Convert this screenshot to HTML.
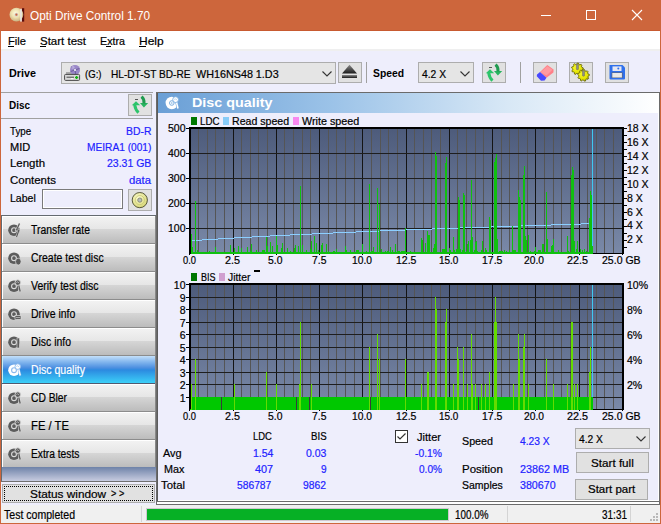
<!DOCTYPE html><html><head><meta charset="utf-8"><style>html,body{margin:0;padding:0;width:661px;height:524px;overflow:hidden;font-family:"Liberation Sans",sans-serif;}</style></head><body><div style="position:relative;width:661px;height:524px;overflow:hidden"><div style="position:absolute;left:0px;top:0px;width:661px;height:524px;background:#eeeefc"></div>
<div style="position:absolute;left:0px;top:0px;width:661px;height:31px;background:#cd663c"></div>
<div style="position:absolute;left:0px;top:30px;width:661px;height:1px;background:#c85a30"></div>
<div style="position:absolute;left:0px;top:0px;width:1px;height:524px;background:#cd663c"></div>
<div style="position:absolute;left:660px;top:0px;width:1px;height:524px;background:#cd663c"></div>
<div style="position:absolute;left:0px;top:523px;width:661px;height:1px;background:#cd663c"></div>
<div style="position:absolute;left:1px;top:31px;width:659px;height:18px;background:#fff"></div>
<div style="position:absolute;left:1px;top:49px;width:659px;height:2px;background:#efefef"></div>
<svg style="position:absolute;left:6px;top:5px" width="22" height="20" viewBox="0 0 22 20">
<defs><radialGradient id="cdg" cx="45%" cy="40%" r="60%"><stop offset="0" stop-color="#fffce0"/><stop offset="0.5" stop-color="#efe2b0"/><stop offset="1" stop-color="#c8b080"/></radialGradient></defs>
<rect x="16" y="3.2" width="2.2" height="13.4" fill="#5a0c0c"/>
<circle cx="10.4" cy="9.7" r="6.9" fill="url(#cdg)"/>
<rect x="14.2" y="3.8" width="1.6" height="12.8" fill="#e8e8e8"/>
<circle cx="10.4" cy="9.7" r="1.9" fill="#d0d0d0"/>
<circle cx="10.4" cy="9.7" r="1.1" fill="#cd663c"/>
</svg>
<div style="position:absolute;left:30.00px;top:9.84px;font-size:12px;line-height:12px;color:#fff;font-weight:normal;white-space:pre;transform:scaleX(0.9832);transform-origin:0 0;-webkit-text-stroke:0.2px currentColor;-webkit-text-stroke:0;">Opti Drive Control 1.70</div>
<div style="position:absolute;left:541px;top:15px;width:10px;height:1px;background:#fff"></div>
<div style="position:absolute;left:586px;top:10px;width:10px;height:10px;border:1px solid #fff;box-sizing:border-box"></div>
<svg style="position:absolute;left:631px;top:9px" width="12" height="12" viewBox="0 0 12 12"><path d="M1 1L11 11M11 1L1 11" stroke="#fff" stroke-width="1.1"/></svg>
<div style="position:absolute;left:8.00px;top:35.69px;font-size:11px;line-height:11px;color:#000;font-weight:normal;white-space:pre;transform:scaleX(1.0141);transform-origin:0 0;-webkit-text-stroke:0.2px currentColor;">File</div>
<div style="position:absolute;left:40.00px;top:35.69px;font-size:11px;line-height:11px;color:#000;font-weight:normal;white-space:pre;transform:scaleX(1.0455);transform-origin:0 0;-webkit-text-stroke:0.2px currentColor;">Start test</div>
<div style="position:absolute;left:100.00px;top:35.69px;font-size:11px;line-height:11px;color:#000;font-weight:normal;white-space:pre;transform:scaleX(0.9728);transform-origin:0 0;-webkit-text-stroke:0.2px currentColor;">Extra</div>
<div style="position:absolute;left:139.00px;top:35.69px;font-size:11px;line-height:11px;color:#000;font-weight:normal;white-space:pre;transform:scaleX(1.0885);transform-origin:0 0;-webkit-text-stroke:0.2px currentColor;">Help</div>
<div style="position:absolute;left:8px;top:46px;width:6px;height:1px;background:#000"></div>
<div style="position:absolute;left:40px;top:46px;width:6px;height:1px;background:#000"></div>
<div style="position:absolute;left:106px;top:46px;width:5px;height:1px;background:#000"></div>
<div style="position:absolute;left:139px;top:46px;width:7px;height:1px;background:#000"></div>
<div style="position:absolute;left:9.00px;top:68.19px;font-size:11px;line-height:11px;color:#000;font-weight:bold;white-space:pre;transform:scaleX(0.9818);transform-origin:0 0;">Drive</div>
<div style="position:absolute;left:61px;top:62px;width:275px;height:22px;background:#e5e5e5;border:1px solid #adadad;box-sizing:border-box"></div>
<div style="position:absolute;left:84.50px;top:68.69px;font-size:11px;line-height:11px;color:#000;font-weight:normal;white-space:pre;transform:scaleX(0.8707);transform-origin:0 0;-webkit-text-stroke:0.2px currentColor;">(G:)</div>
<div style="position:absolute;left:110.50px;top:68.69px;font-size:11px;line-height:11px;color:#000;font-weight:normal;white-space:pre;transform:scaleX(0.9180);transform-origin:0 0;-webkit-text-stroke:0.2px currentColor;">HL-DT-ST BD-RE</div>
<div style="position:absolute;left:196.40px;top:68.69px;font-size:11px;line-height:11px;color:#000;font-weight:normal;white-space:pre;transform:scaleX(0.9793);transform-origin:0 0;-webkit-text-stroke:0.2px currentColor;">WH16NS48 1.D3</div>
<svg style="position:absolute;left:322px;top:71px" width="10" height="6" viewBox="0 0 10 6"><path d="M0.5 0.5L5 5L9.5 0.5" fill="none" stroke="#333" stroke-width="1.1"/></svg>
<svg style="position:absolute;left:62px;top:63px" width="22" height="20" viewBox="0 0 22 20">
<rect x="4" y="9" width="7" height="3" fill="#a8a8a8"/>
<circle cx="13" cy="6.9" r="5" fill="#9a88c8"/>
<path d="M13 6.9L9.2 3.8M13 6.9L17.5 5.4M13 6.9L13.8 11.6M13 6.9L8.6 8.6" stroke="#5a4a88" stroke-width="1.1" opacity="0.65"/><circle cx="11" cy="4.6" r="1.6" fill="#c8bce8" opacity="0.7"/>
<circle cx="13" cy="6.9" r="1" fill="#fff"/>
<rect x="2.6" y="11.4" width="15" height="6" rx="1" fill="#dadada" stroke="#4a4a4a" stroke-width="1"/>
<rect x="4.5" y="13.6" width="7.5" height="1.3" fill="#6a6a6a"/>
<rect x="9" y="15.2" width="2.2" height="0.9" fill="#fff"/>
<path d="M14.6 12.9V16.1M13 14.5H16.2" stroke="#10b010" stroke-width="1.3"/>
</svg>
<div style="position:absolute;left:338px;top:62px;width:24px;height:21px;background:#e1e1e1;border:1px solid #adadad;box-sizing:border-box"></div>
<svg style="position:absolute;left:338px;top:62px" width="24" height="21" viewBox="0 0 24 21"><defs><linearGradient id="ejg" x1="0" y1="0" x2="0" y2="1"><stop offset="0" stop-color="#8a8a8a"/><stop offset="1" stop-color="#1a1a1a"/></linearGradient></defs><path d="M11.5 2.7L19 11.6H4Z" fill="url(#ejg)"/><rect x="4" y="13" width="15" height="3" fill="url(#ejg)"/></svg>
<div style="position:absolute;left:366px;top:62px;width:1px;height:21px;background:#a0a0a0"></div>
<div style="position:absolute;left:373.00px;top:68.19px;font-size:11px;line-height:11px;color:#000;font-weight:bold;white-space:pre;transform:scaleX(0.9394);transform-origin:0 0;">Speed</div>
<div style="position:absolute;left:418px;top:62px;width:56px;height:21px;background:#e5e5e5;border:1px solid #adadad;box-sizing:border-box"></div>
<div style="position:absolute;left:422.00px;top:68.69px;font-size:11px;line-height:11px;color:#000;font-weight:normal;white-space:pre;transform:scaleX(0.9339);transform-origin:0 0;-webkit-text-stroke:0.2px currentColor;">4.2 X</div>
<svg style="position:absolute;left:460px;top:71px" width="10" height="6" viewBox="0 0 10 6"><path d="M0.5 0.5L5 5L9.5 0.5" fill="none" stroke="#333" stroke-width="1.1"/></svg>
<div style="position:absolute;left:482px;top:62px;width:24px;height:21px;background:#e1e1e1;border:1px solid #adadad;box-sizing:border-box"></div>
<svg style="position:absolute;left:482px;top:62px" width="24" height="21" viewBox="0 0 24 21">
<path d="M3.8 11.3L8 7.2L12.2 11.3Z" fill="#2cc46a"/>
<path d="M6.6 10.5Q7.5 16 10.5 18.6" fill="none" stroke="#2cc46a" stroke-width="3"/>
<path d="M12 9L20.2 9L15.9 13.4Z" fill="#26b45e"/>
<path d="M13.5 2.6Q16.5 5 16 9.5" fill="none" stroke="#1f9a50" stroke-width="3"/>
<path d="M7 5.5H10" stroke="#333" stroke-width="0.8"/>
</svg>
<div style="position:absolute;left:520px;top:62px;width:1px;height:21px;background:#a0a0a0"></div>
<div style="position:absolute;left:533px;top:62px;width:24px;height:21px;background:#e1e1e1;border:1px solid #adadad;box-sizing:border-box"></div>
<svg style="position:absolute;left:533px;top:62px" width="24" height="21" viewBox="0 0 24 21"><path d="M7 10L14.3 3L20.6 7.4L20.4 10.4L13.5 15.8Z" fill="#ff8088"/><path d="M7.5 10.2L14.3 4.2L19.5 7.8L13.5 13.5Z" fill="#ff9aa0"/><path d="M7 10L13.5 15.8L11.6 18.5L8 18.8L3.8 14.2L4 12.5Z" fill="#4848ff"/></svg>
<div style="position:absolute;left:569px;top:62px;width:24px;height:21px;background:#e1e1e1;border:1px solid #adadad;box-sizing:border-box"></div>
<svg style="position:absolute;left:569px;top:62px" width="24" height="21" viewBox="0 0 24 21"><defs><radialGradient id="gyg" cx="40%" cy="35%" r="70%"><stop offset="0" stop-color="#ffff30"/><stop offset="0.7" stop-color="#e0e000"/><stop offset="1" stop-color="#9a9a00"/></radialGradient></defs><polygon points="8.40,1.00 9.42,1.09 10.01,2.48 10.75,2.83 12.19,2.38 12.92,3.11 12.47,4.55 12.82,5.29 14.21,5.88 14.30,6.90 13.03,7.72 12.82,8.51 13.51,9.85 12.92,10.69 11.42,10.50 10.75,10.97 10.42,12.44 9.42,12.71 8.40,11.60 7.58,11.53 6.38,12.44 5.45,12.01 5.38,10.50 4.80,9.92 3.29,9.85 2.86,8.92 3.77,7.72 3.70,6.90 2.59,5.88 2.86,4.88 4.33,4.55 4.80,3.88 4.61,2.38 5.45,1.79 6.79,2.48 7.58,2.27" fill="url(#gyg)" stroke="#5c5c00" stroke-width="0.8"/><rect x="7.30" y="2.10" width="2.2" height="5.6" rx="0.8" fill="#8c8c8c" stroke="#606040" stroke-width="0.4"/><polygon points="14.50,7.50 15.52,7.59 16.11,8.98 16.85,9.33 18.29,8.88 19.02,9.61 18.57,11.05 18.92,11.79 20.31,12.38 20.40,13.40 19.13,14.22 18.92,15.01 19.61,16.35 19.02,17.19 17.52,17.00 16.85,17.47 16.52,18.94 15.52,19.21 14.50,18.10 13.68,18.03 12.48,18.94 11.55,18.51 11.48,17.00 10.90,16.42 9.39,16.35 8.96,15.42 9.87,14.22 9.80,13.40 8.69,12.38 8.96,11.38 10.43,11.05 10.90,10.38 10.71,8.88 11.55,8.29 12.89,8.98 13.68,8.77" fill="url(#gyg)" stroke="#5c5c00" stroke-width="0.8"/><rect x="13.40" y="8.60" width="2.2" height="5.6" rx="0.8" fill="#8c8c8c" stroke="#606040" stroke-width="0.4"/></svg>
<div style="position:absolute;left:605px;top:62px;width:24px;height:21px;background:#e1e1e1;border:1px solid #adadad;box-sizing:border-box"></div>
<svg style="position:absolute;left:605px;top:62px" width="24" height="21" viewBox="0 0 24 21"><path d="M4.5 3H17.5L20 5.5V16.6Q20 17.6 19 17.6H5.5Q4.5 17.6 4.5 16.6Z" fill="#2f70ec"/><rect x="7.5" y="4.4" width="9" height="4.6" fill="#e6e8f2"/><circle cx="13.3" cy="6.5" r="1" fill="#3070f0"/><rect x="6.6" y="10.4" width="11" height="5.6" fill="#606878"/><rect x="7.3" y="11" width="9.6" height="4.5" fill="#e8e8e8"/></svg>
<div style="position:absolute;left:1px;top:92px;width:152px;height:1px;background:#a0a0a0"></div>
<div style="position:absolute;left:9.00px;top:99.69px;font-size:11px;line-height:11px;color:#000;font-weight:bold;white-space:pre;transform:scaleX(0.9032);transform-origin:0 0;">Disc</div>
<div style="position:absolute;left:128px;top:94px;width:24px;height:22px;background:#e1e1e1;border:1px solid #adadad;box-sizing:border-box"></div>
<svg style="position:absolute;left:128px;top:94px" width="24" height="21" viewBox="0 0 24 21">
<path d="M3.8 11.3L8 7.2L12.2 11.3Z" fill="#2cc46a"/>
<path d="M6.6 10.5Q7.5 16 10.5 18.6" fill="none" stroke="#2cc46a" stroke-width="3"/>
<path d="M12 9L20.2 9L15.9 13.4Z" fill="#26b45e"/>
<path d="M13.5 2.6Q16.5 5 16 9.5" fill="none" stroke="#1f9a50" stroke-width="3"/>
<path d="M7 5.5H10" stroke="#333" stroke-width="0.8"/>
</svg>
<div style="position:absolute;left:1px;top:118px;width:152px;height:1px;background:#a0a0a0"></div>
<div style="position:absolute;left:9.50px;top:125.69px;font-size:11px;line-height:11px;color:#000;font-weight:normal;white-space:pre;transform:scaleX(0.8847);transform-origin:0 0;-webkit-text-stroke:0.2px currentColor;">Type</div>
<div style="position:absolute;left:125.60px;top:125.69px;font-size:11px;line-height:11px;color:#2222ff;font-weight:normal;white-space:pre;transform:scaleX(0.9442);transform-origin:0 0;-webkit-text-stroke:0.2px currentColor;">BD-R</div>
<div style="position:absolute;left:9.50px;top:141.69px;font-size:11px;line-height:11px;color:#000;font-weight:normal;white-space:pre;transform:scaleX(1.0025);transform-origin:0 0;-webkit-text-stroke:0.2px currentColor;">MID</div>
<div style="position:absolute;left:86.60px;top:141.69px;font-size:11px;line-height:11px;color:#2222ff;font-weight:normal;white-space:pre;transform:scaleX(0.9240);transform-origin:0 0;-webkit-text-stroke:0.2px currentColor;">MEIRA1 (001)</div>
<div style="position:absolute;left:9.50px;top:158.19px;font-size:11px;line-height:11px;color:#000;font-weight:normal;white-space:pre;transform:scaleX(1.0401);transform-origin:0 0;-webkit-text-stroke:0.2px currentColor;">Length</div>
<div style="position:absolute;left:106.60px;top:158.19px;font-size:11px;line-height:11px;color:#2222ff;font-weight:normal;white-space:pre;transform:scaleX(0.9548);transform-origin:0 0;-webkit-text-stroke:0.2px currentColor;">23.31 GB</div>
<div style="position:absolute;left:9.50px;top:174.69px;font-size:11px;line-height:11px;color:#000;font-weight:normal;white-space:pre;transform:scaleX(1.0420);transform-origin:0 0;-webkit-text-stroke:0.2px currentColor;">Contents</div>
<div style="position:absolute;left:129.00px;top:174.69px;font-size:11px;line-height:11px;color:#2222ff;font-weight:normal;white-space:pre;transform:scaleX(1.0256);transform-origin:0 0;-webkit-text-stroke:0.2px currentColor;">data</div>
<div style="position:absolute;left:9.50px;top:193.49px;font-size:11px;line-height:11px;color:#000;font-weight:normal;white-space:pre;transform:scaleX(0.9591);transform-origin:0 0;-webkit-text-stroke:0.2px currentColor;">Label</div>
<div style="position:absolute;left:42px;top:189px;width:81px;height:20px;background:#eeeefc;border:1px solid #7a7a7a;box-shadow:inset 0 0 0 1px #fff;box-sizing:border-box"></div>
<div style="position:absolute;left:128px;top:189px;width:24px;height:22px;background:#e1e1e1;border:1px solid #adadad;box-sizing:border-box"></div>
<svg style="position:absolute;left:128px;top:189px" width="24" height="22" viewBox="0 0 24 22"><defs><radialGradient id="ldg" cx="40%" cy="35%" r="65%"><stop offset="0" stop-color="#fcfcd0"/><stop offset="1" stop-color="#d8d878"/></radialGradient></defs><circle cx="11.8" cy="11.1" r="7.6" fill="url(#ldg)" stroke="#4a4a30" stroke-width="0.9"/><circle cx="11.8" cy="11.1" r="4.6" fill="none" stroke="#c8c870" stroke-width="0.8"/><circle cx="11.8" cy="11.1" r="2.1" fill="#b8c0b8" stroke="#707060" stroke-width="0.7"/></svg>
<div style="position:absolute;left:1px;top:215px;width:155px;height:1px;background:#646a70"></div>
<div style="position:absolute;left:1px;top:215px;width:1px;height:267px;background:#646a70"></div>
<div style="position:absolute;left:2px;top:216px;width:154px;height:28px;background:linear-gradient(#ffffff 0px,#ffffff 1px,#f2f2f2 1px,#e6e6e6 13px,#d6d6d6 13px,#bcbcbc 27px,#8c8c8c 27px)"></div>
<div style="position:absolute;left:155px;top:216px;width:1px;height:28px;background:#888"></div>
<div style="position:absolute;left:2px;top:216px;width:1px;height:27px;background:#fff"></div>
<div style="position:absolute;left:31.00px;top:223.84px;font-size:12px;line-height:12px;color:#000;font-weight:normal;white-space:pre;transform:scaleX(0.8645);transform-origin:0 0;-webkit-text-stroke:0.2px currentColor;">Transfer rate</div>
<svg style="position:absolute;left:4px;top:220px" width="20" height="20" viewBox="0 0 20 20"><circle cx="10" cy="10.2" r="5.8" fill="#5c5c5c"/><circle cx="10" cy="10.2" r="2.4" fill="none" stroke="#dcdcdc" stroke-width="1.1"/><path d="M15.5 3.5L12.5 10H15L12.5 17" fill="none" stroke="#dcdcdc" stroke-width="2.2"/><path d="M15.5 3.5L12.5 10H15L12.5 17" fill="none" stroke="#5c5c5c" stroke-width="1.2"/></svg>
<div style="position:absolute;left:2px;top:244px;width:154px;height:28px;background:linear-gradient(#ffffff 0px,#ffffff 1px,#f2f2f2 1px,#e6e6e6 13px,#d6d6d6 13px,#bcbcbc 27px,#8c8c8c 27px)"></div>
<div style="position:absolute;left:155px;top:244px;width:1px;height:28px;background:#888"></div>
<div style="position:absolute;left:2px;top:244px;width:1px;height:27px;background:#fff"></div>
<div style="position:absolute;left:31.00px;top:251.84px;font-size:12px;line-height:12px;color:#000;font-weight:normal;white-space:pre;transform:scaleX(0.8710);transform-origin:0 0;-webkit-text-stroke:0.2px currentColor;">Create test disc</div>
<svg style="position:absolute;left:4px;top:248px" width="20" height="20" viewBox="0 0 20 20"><circle cx="10" cy="10.2" r="5.8" fill="#5c5c5c"/><circle cx="10" cy="10.2" r="2.4" fill="none" stroke="#dcdcdc" stroke-width="1.1"/><ellipse cx="14.3" cy="13.6" rx="2.8" ry="3.4" fill="#5c5c5c" stroke="#dcdcdc" stroke-width="0.7"/></svg>
<div style="position:absolute;left:2px;top:272px;width:154px;height:28px;background:linear-gradient(#ffffff 0px,#ffffff 1px,#f2f2f2 1px,#e6e6e6 13px,#d6d6d6 13px,#bcbcbc 27px,#8c8c8c 27px)"></div>
<div style="position:absolute;left:155px;top:272px;width:1px;height:28px;background:#888"></div>
<div style="position:absolute;left:2px;top:272px;width:1px;height:27px;background:#fff"></div>
<div style="position:absolute;left:31.00px;top:279.84px;font-size:12px;line-height:12px;color:#000;font-weight:normal;white-space:pre;transform:scaleX(0.8739);transform-origin:0 0;-webkit-text-stroke:0.2px currentColor;">Verify test disc</div>
<svg style="position:absolute;left:4px;top:276px" width="20" height="20" viewBox="0 0 20 20"><circle cx="10" cy="10.2" r="5.8" fill="#5c5c5c"/><circle cx="10" cy="10.2" r="2.4" fill="none" stroke="#dcdcdc" stroke-width="1.1"/><path d="M14.5 8.5L16.2 15.5" stroke="#dcdcdc" stroke-width="2.4"/><path d="M14.5 8.5L16.2 15.5" stroke="#5c5c5c" stroke-width="1.3"/><circle cx="13.8" cy="6.6" r="2.8" fill="#5c5c5c" stroke="#dcdcdc" stroke-width="0.9"/><path d="M12.4 6.8L13.4 5.6L14.4 6.8L15.2 5.8" fill="none" stroke="#dcdcdc" stroke-width="0.6"/></svg>
<div style="position:absolute;left:2px;top:300px;width:154px;height:28px;background:linear-gradient(#ffffff 0px,#ffffff 1px,#f2f2f2 1px,#e6e6e6 13px,#d6d6d6 13px,#bcbcbc 27px,#8c8c8c 27px)"></div>
<div style="position:absolute;left:155px;top:300px;width:1px;height:28px;background:#888"></div>
<div style="position:absolute;left:2px;top:300px;width:1px;height:27px;background:#fff"></div>
<div style="position:absolute;left:31.00px;top:307.84px;font-size:12px;line-height:12px;color:#000;font-weight:normal;white-space:pre;transform:scaleX(0.8757);transform-origin:0 0;-webkit-text-stroke:0.2px currentColor;">Drive info</div>
<svg style="position:absolute;left:4px;top:304px" width="20" height="20" viewBox="0 0 20 20"><circle cx="10" cy="10.2" r="5.8" fill="#5c5c5c"/><circle cx="10" cy="10.2" r="2.4" fill="none" stroke="#dcdcdc" stroke-width="1.1"/><rect x="11" y="11.5" width="6" height="4" fill="#5c5c5c" stroke="#dcdcdc" stroke-width="0.7"/><path d="M12 13.5H16" stroke="#dcdcdc" stroke-width="0.6"/></svg>
<div style="position:absolute;left:2px;top:328px;width:154px;height:28px;background:linear-gradient(#ffffff 0px,#ffffff 1px,#f2f2f2 1px,#e6e6e6 13px,#d6d6d6 13px,#bcbcbc 27px,#8c8c8c 27px)"></div>
<div style="position:absolute;left:155px;top:328px;width:1px;height:28px;background:#888"></div>
<div style="position:absolute;left:2px;top:328px;width:1px;height:27px;background:#fff"></div>
<div style="position:absolute;left:31.00px;top:335.84px;font-size:12px;line-height:12px;color:#000;font-weight:normal;white-space:pre;transform:scaleX(0.8696);transform-origin:0 0;-webkit-text-stroke:0.2px currentColor;">Disc info</div>
<svg style="position:absolute;left:4px;top:332px" width="20" height="20" viewBox="0 0 20 20"><circle cx="10" cy="10.2" r="5.8" fill="#5c5c5c"/><circle cx="10" cy="10.2" r="2.4" fill="none" stroke="#dcdcdc" stroke-width="1.1"/><rect x="13" y="6" width="2.4" height="10" fill="#5c5c5c" stroke="#dcdcdc" stroke-width="0.6"/></svg>
<div style="position:absolute;left:2px;top:356px;width:154px;height:28px;background:linear-gradient(#c4e0fa 0px,#8cbcf0 5px,#4a8ee0 12px,#2c8ae0 14px,#3cd0f8 27px,#505a70 27px)"></div>
<div style="position:absolute;left:155px;top:356px;width:1px;height:28px;background:#888"></div>
<div style="position:absolute;left:2px;top:356px;width:1px;height:27px;background:#c8f0f8"></div>
<div style="position:absolute;left:31.00px;top:363.84px;font-size:12px;line-height:12px;color:#fff;font-weight:normal;white-space:pre;transform:scaleX(0.8802);transform-origin:0 0;-webkit-text-stroke:0.2px currentColor;">Disc quality</div>
<svg style="position:absolute;left:4px;top:360px" width="20" height="20" viewBox="0 0 20 20"><circle cx="10" cy="10.2" r="5.8" fill="#ffffff"/><circle cx="10" cy="10.2" r="2.4" fill="none" stroke="#8ab8ec" stroke-width="1.1"/><path d="M14.5 8.5L16.2 15.5" stroke="#8ab8ec" stroke-width="2.4"/><path d="M14.5 8.5L16.2 15.5" stroke="#ffffff" stroke-width="1.3"/><circle cx="13.8" cy="6.6" r="2.8" fill="#ffffff" stroke="#8ab8ec" stroke-width="0.9"/><path d="M12.4 6.8L13.4 5.6L14.4 6.8L15.2 5.8" fill="none" stroke="#8ab8ec" stroke-width="0.6"/></svg>
<div style="position:absolute;left:2px;top:384px;width:154px;height:28px;background:linear-gradient(#ffffff 0px,#ffffff 1px,#f2f2f2 1px,#e6e6e6 13px,#d6d6d6 13px,#bcbcbc 27px,#8c8c8c 27px)"></div>
<div style="position:absolute;left:155px;top:384px;width:1px;height:28px;background:#888"></div>
<div style="position:absolute;left:2px;top:384px;width:1px;height:27px;background:#fff"></div>
<div style="position:absolute;left:31.00px;top:391.84px;font-size:12px;line-height:12px;color:#000;font-weight:normal;white-space:pre;transform:scaleX(0.8571);transform-origin:0 0;-webkit-text-stroke:0.2px currentColor;">CD Bler</div>
<svg style="position:absolute;left:4px;top:388px" width="20" height="20" viewBox="0 0 20 20"><circle cx="10" cy="10.2" r="5.8" fill="#5c5c5c"/><circle cx="10" cy="10.2" r="2.4" fill="none" stroke="#dcdcdc" stroke-width="1.1"/><path d="M14.5 8.5L16.2 15.5" stroke="#dcdcdc" stroke-width="2.4"/><path d="M14.5 8.5L16.2 15.5" stroke="#5c5c5c" stroke-width="1.3"/><circle cx="13.8" cy="6.6" r="2.8" fill="#5c5c5c" stroke="#dcdcdc" stroke-width="0.9"/><path d="M12.4 6.8L13.4 5.6L14.4 6.8L15.2 5.8" fill="none" stroke="#dcdcdc" stroke-width="0.6"/></svg>
<div style="position:absolute;left:2px;top:412px;width:154px;height:28px;background:linear-gradient(#ffffff 0px,#ffffff 1px,#f2f2f2 1px,#e6e6e6 13px,#d6d6d6 13px,#bcbcbc 27px,#8c8c8c 27px)"></div>
<div style="position:absolute;left:155px;top:412px;width:1px;height:28px;background:#888"></div>
<div style="position:absolute;left:2px;top:412px;width:1px;height:27px;background:#fff"></div>
<div style="position:absolute;left:31.00px;top:419.84px;font-size:12px;line-height:12px;color:#000;font-weight:normal;white-space:pre;transform:scaleX(0.9394);transform-origin:0 0;-webkit-text-stroke:0.2px currentColor;">FE / TE</div>
<svg style="position:absolute;left:4px;top:416px" width="20" height="20" viewBox="0 0 20 20"><circle cx="10" cy="10.2" r="5.8" fill="#5c5c5c"/><circle cx="10" cy="10.2" r="2.4" fill="none" stroke="#dcdcdc" stroke-width="1.1"/><path d="M14.5 8.5L16.2 15.5" stroke="#dcdcdc" stroke-width="2.4"/><path d="M14.5 8.5L16.2 15.5" stroke="#5c5c5c" stroke-width="1.3"/><circle cx="13.8" cy="6.6" r="2.8" fill="#5c5c5c" stroke="#dcdcdc" stroke-width="0.9"/><path d="M12.4 6.8L13.4 5.6L14.4 6.8L15.2 5.8" fill="none" stroke="#dcdcdc" stroke-width="0.6"/></svg>
<div style="position:absolute;left:2px;top:440px;width:154px;height:28px;background:linear-gradient(#ffffff 0px,#ffffff 1px,#f2f2f2 1px,#e6e6e6 13px,#d6d6d6 13px,#bcbcbc 27px,#8c8c8c 27px)"></div>
<div style="position:absolute;left:155px;top:440px;width:1px;height:28px;background:#888"></div>
<div style="position:absolute;left:2px;top:440px;width:1px;height:27px;background:#fff"></div>
<div style="position:absolute;left:31.00px;top:447.84px;font-size:12px;line-height:12px;color:#000;font-weight:normal;white-space:pre;transform:scaleX(0.8536);transform-origin:0 0;-webkit-text-stroke:0.2px currentColor;">Extra tests</div>
<svg style="position:absolute;left:4px;top:444px" width="20" height="20" viewBox="0 0 20 20"><circle cx="10" cy="10.2" r="5.8" fill="#5c5c5c"/><circle cx="10" cy="10.2" r="2.4" fill="none" stroke="#dcdcdc" stroke-width="1.1"/><path d="M14.5 8.5L16.2 15.5" stroke="#dcdcdc" stroke-width="2.4"/><path d="M14.5 8.5L16.2 15.5" stroke="#5c5c5c" stroke-width="1.3"/><circle cx="13.8" cy="6.6" r="2.8" fill="#5c5c5c" stroke="#dcdcdc" stroke-width="0.9"/><path d="M12.4 6.8L13.4 5.6L14.4 6.8L15.2 5.8" fill="none" stroke="#dcdcdc" stroke-width="0.6"/></svg>
<div style="position:absolute;left:2px;top:467px;width:154px;height:14px;background:linear-gradient(#6e82a8,#c8cce0)"></div>
<div style="position:absolute;left:1px;top:481px;width:155px;height:1px;background:#707070"></div>
<div style="position:absolute;left:2px;top:484px;width:153px;height:19px;background:#e1e1e1;border:1px solid #adadad;box-sizing:border-box"></div>
<div style="position:absolute;left:4px;top:486px;width:149px;height:15px;border:1px dotted #000;box-sizing:border-box"></div>
<div style="position:absolute;left:30.30px;top:488.87px;font-size:11.5px;line-height:11.5px;color:#000;font-weight:normal;white-space:pre;transform:scaleX(1.0270);transform-origin:0 0;-webkit-text-stroke:0.2px currentColor;">Status window</div>
<div style="position:absolute;left:110.70px;top:489.14px;font-size:10px;line-height:10px;color:#000;font-weight:normal;white-space:pre;transform:scaleX(0.9204);transform-origin:0 0;-webkit-text-stroke:0.2px currentColor;">&gt; &gt;</div>
<div style="position:absolute;left:156px;top:92px;width:1px;height:413px;background:#6b6b6b"></div>
<div style="position:absolute;left:157px;top:92px;width:1px;height:410px;background:#5c5c5c"></div>
<div style="position:absolute;left:156px;top:92px;width:504px;height:1px;background:#6b6b6b"></div>
<div style="position:absolute;left:659px;top:92px;width:1px;height:413px;background:#6b6b6b"></div>
<div style="position:absolute;left:658px;top:93px;width:1px;height:411px;background:#fff"></div>
<div style="position:absolute;left:158px;top:500px;width:500px;height:1px;background:#fff"></div>
<div style="position:absolute;left:157px;top:501px;width:502px;height:1px;background:#6b6b6b"></div>
<div style="position:absolute;left:157px;top:502px;width:502px;height:2px;background:#fff"></div>
<div style="position:absolute;left:156px;top:504px;width:504px;height:1px;background:#6b6b6b"></div>
<div style="position:absolute;left:158px;top:93px;width:500px;height:20px;background:linear-gradient(90deg,#6a9fd6 0%,#9cc3e8 35%,#d8e8f6 70%,#ffffff 100%)"></div>
<svg style="position:absolute;left:162px;top:93px" width="20" height="20" viewBox="0 0 20 20"><circle cx="9.8" cy="10" r="6.2" fill="#fff"/><circle cx="9.8" cy="10" r="2.3" fill="none" stroke="#7aaee0" stroke-width="1"/><circle cx="9.8" cy="10" r="0.8" fill="#7aaee0"/><path d="M14.3 8.5L16 15.5" stroke="#7aaee0" stroke-width="2.6"/><path d="M14.3 8.5L16 15.5" stroke="#fff" stroke-width="1.5"/><circle cx="13.6" cy="6.6" r="2.9" fill="#fff" stroke="#7aaee0" stroke-width="0.9"/><path d="M12.2 6.8L13.2 5.6L14.2 6.8L15 5.8" fill="none" stroke="#9cc4ec" stroke-width="0.6"/></svg>
<div style="position:absolute;left:191.60px;top:96.37px;font-size:13.5px;line-height:13.5px;color:#fff;font-weight:bold;white-space:pre;transform:scaleX(1.0614);transform-origin:0 0;">Disc quality</div>
<svg style="position:absolute;left:0;top:0" width="661" height="524" shape-rendering="crispEdges"><defs><linearGradient id="pgu" x1="0" y1="0" x2="0" y2="1"><stop offset="0" stop-color="#4d5b7b"/><stop offset="1" stop-color="#7a89a8"/></linearGradient></defs><rect x="190" y="128" width="433" height="125" fill="url(#pgu)"/><rect x="198" y="128" width="1" height="125" fill="#555555"/><rect x="207" y="128" width="1" height="125" fill="#555555"/><rect x="215" y="128" width="1" height="125" fill="#555555"/><rect x="224" y="128" width="1" height="125" fill="#555555"/><rect x="233" y="128" width="1" height="125" fill="#141414"/><rect x="241" y="128" width="1" height="125" fill="#555555"/><rect x="250" y="128" width="1" height="125" fill="#555555"/><rect x="258" y="128" width="1" height="125" fill="#555555"/><rect x="267" y="128" width="1" height="125" fill="#555555"/><rect x="276" y="128" width="1" height="125" fill="#141414"/><rect x="284" y="128" width="1" height="125" fill="#555555"/><rect x="293" y="128" width="1" height="125" fill="#555555"/><rect x="302" y="128" width="1" height="125" fill="#555555"/><rect x="310" y="128" width="1" height="125" fill="#555555"/><rect x="319" y="128" width="1" height="125" fill="#141414"/><rect x="328" y="128" width="1" height="125" fill="#555555"/><rect x="336" y="128" width="1" height="125" fill="#555555"/><rect x="345" y="128" width="1" height="125" fill="#555555"/><rect x="354" y="128" width="1" height="125" fill="#555555"/><rect x="362" y="128" width="1" height="125" fill="#141414"/><rect x="371" y="128" width="1" height="125" fill="#555555"/><rect x="380" y="128" width="1" height="125" fill="#555555"/><rect x="388" y="128" width="1" height="125" fill="#555555"/><rect x="397" y="128" width="1" height="125" fill="#555555"/><rect x="406" y="128" width="1" height="125" fill="#141414"/><rect x="414" y="128" width="1" height="125" fill="#555555"/><rect x="423" y="128" width="1" height="125" fill="#555555"/><rect x="431" y="128" width="1" height="125" fill="#555555"/><rect x="440" y="128" width="1" height="125" fill="#555555"/><rect x="449" y="128" width="1" height="125" fill="#141414"/><rect x="457" y="128" width="1" height="125" fill="#555555"/><rect x="466" y="128" width="1" height="125" fill="#555555"/><rect x="475" y="128" width="1" height="125" fill="#555555"/><rect x="483" y="128" width="1" height="125" fill="#555555"/><rect x="492" y="128" width="1" height="125" fill="#141414"/><rect x="501" y="128" width="1" height="125" fill="#555555"/><rect x="509" y="128" width="1" height="125" fill="#555555"/><rect x="518" y="128" width="1" height="125" fill="#555555"/><rect x="527" y="128" width="1" height="125" fill="#555555"/><rect x="535" y="128" width="1" height="125" fill="#141414"/><rect x="544" y="128" width="1" height="125" fill="#555555"/><rect x="553" y="128" width="1" height="125" fill="#555555"/><rect x="561" y="128" width="1" height="125" fill="#555555"/><rect x="570" y="128" width="1" height="125" fill="#555555"/><rect x="579" y="128" width="1" height="125" fill="#141414"/><rect x="587" y="128" width="1" height="125" fill="#555555"/><rect x="596" y="128" width="1" height="125" fill="#555555"/><rect x="604" y="128" width="1" height="125" fill="#555555"/><rect x="613" y="128" width="1" height="125" fill="#555555"/><rect x="190" y="153" width="433" height="1" fill="#1e1e1e"/><rect x="190" y="178" width="433" height="1" fill="#1e1e1e"/><rect x="190" y="203" width="433" height="1" fill="#1e1e1e"/><rect x="190" y="228" width="433" height="1" fill="#1e1e1e"/><rect x="189" y="253" width="435" height="1" fill="#000"/><rect x="189" y="254" width="1" height="1" fill="#000"/><rect x="233" y="254" width="1" height="1" fill="#000"/><rect x="276" y="254" width="1" height="1" fill="#000"/><rect x="319" y="254" width="1" height="1" fill="#000"/><rect x="362" y="254" width="1" height="1" fill="#000"/><rect x="406" y="254" width="1" height="1" fill="#000"/><rect x="449" y="254" width="1" height="1" fill="#000"/><rect x="492" y="254" width="1" height="1" fill="#000"/><rect x="535" y="254" width="1" height="1" fill="#000"/><rect x="579" y="254" width="1" height="1" fill="#000"/><rect x="622" y="254" width="1" height="1" fill="#000"/><rect x="190" y="240" width="12" height="1" fill="#8ccfff"/><rect x="202" y="239" width="16" height="1" fill="#8ccfff"/><rect x="218" y="238" width="16" height="1" fill="#8ccfff"/><rect x="234" y="237" width="18" height="1" fill="#8ccfff"/><rect x="252" y="236" width="18" height="1" fill="#8ccfff"/><rect x="270" y="235" width="20" height="1" fill="#8ccfff"/><rect x="290" y="234" width="22" height="1" fill="#8ccfff"/><rect x="312" y="233" width="21" height="1" fill="#8ccfff"/><rect x="333" y="232" width="23" height="1" fill="#8ccfff"/><rect x="356" y="231" width="24" height="1" fill="#8ccfff"/><rect x="380" y="230" width="26" height="1" fill="#8ccfff"/><rect x="406" y="229" width="26" height="1" fill="#8ccfff"/><rect x="432" y="228" width="28" height="1" fill="#8ccfff"/><rect x="460" y="227" width="29" height="1" fill="#8ccfff"/><rect x="489" y="226" width="30" height="1" fill="#8ccfff"/><rect x="519" y="225" width="32" height="1" fill="#8ccfff"/><rect x="551" y="224" width="30" height="1" fill="#8ccfff"/><rect x="581" y="223" width="12" height="1" fill="#8ccfff"/><rect x="592" y="128" width="1" height="118" fill="#40c8f0"/><rect x="191" y="234" width="1" height="20" fill="#10c010"/><rect x="195" y="201" width="1" height="53" fill="#10c010"/><rect x="300" y="186" width="1" height="68" fill="#10c010"/><rect x="266" y="237" width="1" height="17" fill="#10c010"/><rect x="276" y="236" width="1" height="18" fill="#10c010"/><rect x="322" y="244" width="1" height="10" fill="#10c010"/><rect x="326" y="244" width="1" height="10" fill="#10c010"/><rect x="362" y="244" width="1" height="10" fill="#10c010"/><rect x="369" y="184" width="1" height="70" fill="#10c010"/><rect x="377" y="188" width="1" height="66" fill="#10c010"/><rect x="379" y="204" width="1" height="50" fill="#10c010"/><rect x="405" y="228" width="1" height="26" fill="#10c010"/><rect x="421" y="239" width="1" height="15" fill="#10c010"/><rect x="427" y="231" width="1" height="23" fill="#10c010"/><rect x="435" y="152" width="1" height="102" fill="#10c010"/><rect x="436" y="156" width="1" height="98" fill="#10c010"/><rect x="446" y="157" width="1" height="97" fill="#10c010"/><rect x="445" y="163" width="1" height="91" fill="#10c010"/><rect x="453" y="237" width="1" height="17" fill="#10c010"/><rect x="458" y="197" width="1" height="57" fill="#10c010"/><rect x="463" y="193" width="1" height="61" fill="#10c010"/><rect x="471" y="180" width="1" height="74" fill="#10c010"/><rect x="489" y="217" width="1" height="37" fill="#10c010"/><rect x="494" y="162" width="1" height="92" fill="#10c010"/><rect x="496" y="154" width="1" height="100" fill="#10c010"/><rect x="512" y="226" width="1" height="28" fill="#10c010"/><rect x="518" y="190" width="1" height="64" fill="#10c010"/><rect x="519" y="197" width="1" height="57" fill="#10c010"/><rect x="524" y="166" width="1" height="88" fill="#10c010"/><rect x="528" y="235" width="1" height="19" fill="#10c010"/><rect x="546" y="192" width="1" height="62" fill="#10c010"/><rect x="553" y="239" width="1" height="15" fill="#10c010"/><rect x="567" y="237" width="1" height="17" fill="#10c010"/><rect x="572" y="167" width="1" height="87" fill="#10c010"/><rect x="573" y="170" width="1" height="84" fill="#10c010"/><rect x="590" y="191" width="1" height="63" fill="#10c010"/><rect x="589" y="218" width="1" height="36" fill="#10c010"/><rect x="592" y="247" width="1" height="7" fill="#10c010"/><rect x="191" y="247" width="1" height="7" fill="#10c010"/><rect x="192" y="247" width="1" height="7" fill="#10c010"/><rect x="197" y="250" width="1" height="4" fill="#10c010"/><rect x="209" y="251" width="1" height="3" fill="#10c010"/><rect x="215" y="247" width="1" height="7" fill="#10c010"/><rect x="230" y="245" width="1" height="9" fill="#10c010"/><rect x="234" y="248" width="1" height="6" fill="#10c010"/><rect x="238" y="246" width="1" height="8" fill="#10c010"/><rect x="241" y="248" width="1" height="6" fill="#10c010"/><rect x="247" y="247" width="1" height="7" fill="#10c010"/><rect x="251" y="244" width="1" height="10" fill="#10c010"/><rect x="250" y="251" width="1" height="3" fill="#10c010"/><rect x="256" y="250" width="1" height="4" fill="#10c010"/><rect x="262" y="250" width="1" height="4" fill="#10c010"/><rect x="263" y="250" width="1" height="4" fill="#10c010"/><rect x="264" y="250" width="1" height="4" fill="#10c010"/><rect x="266" y="237" width="1" height="17" fill="#10c010"/><rect x="267" y="246" width="1" height="8" fill="#10c010"/><rect x="270" y="242" width="1" height="12" fill="#10c010"/><rect x="272" y="246" width="1" height="8" fill="#10c010"/><rect x="277" y="245" width="1" height="9" fill="#10c010"/><rect x="281" y="248" width="1" height="6" fill="#10c010"/><rect x="282" y="243" width="1" height="11" fill="#10c010"/><rect x="287" y="248" width="1" height="6" fill="#10c010"/><rect x="290" y="251" width="1" height="3" fill="#10c010"/><rect x="294" y="248" width="1" height="6" fill="#10c010"/><rect x="295" y="245" width="1" height="9" fill="#10c010"/><rect x="298" y="246" width="1" height="8" fill="#10c010"/><rect x="302" y="245" width="1" height="9" fill="#10c010"/><rect x="306" y="250" width="1" height="4" fill="#10c010"/><rect x="310" y="249" width="1" height="5" fill="#10c010"/><rect x="311" y="241" width="1" height="13" fill="#10c010"/><rect x="314" y="236" width="1" height="18" fill="#10c010"/><rect x="316" y="243" width="1" height="11" fill="#10c010"/><rect x="318" y="250" width="1" height="4" fill="#10c010"/><rect x="321" y="245" width="1" height="9" fill="#10c010"/><rect x="322" y="243" width="1" height="11" fill="#10c010"/><rect x="326" y="244" width="1" height="10" fill="#10c010"/><rect x="328" y="251" width="1" height="3" fill="#10c010"/><rect x="333" y="251" width="1" height="3" fill="#10c010"/><rect x="334" y="251" width="1" height="3" fill="#10c010"/><rect x="336" y="249" width="1" height="5" fill="#10c010"/><rect x="345" y="246" width="1" height="8" fill="#10c010"/><rect x="346" y="250" width="1" height="4" fill="#10c010"/><rect x="350" y="250" width="1" height="4" fill="#10c010"/><rect x="356" y="250" width="1" height="4" fill="#10c010"/><rect x="357" y="250" width="1" height="4" fill="#10c010"/><rect x="358" y="250" width="1" height="4" fill="#10c010"/><rect x="362" y="244" width="1" height="10" fill="#10c010"/><rect x="366" y="251" width="1" height="3" fill="#10c010"/><rect x="371" y="251" width="1" height="3" fill="#10c010"/><rect x="372" y="251" width="1" height="3" fill="#10c010"/><rect x="373" y="247" width="1" height="7" fill="#10c010"/><rect x="381" y="249" width="1" height="5" fill="#10c010"/><rect x="385" y="251" width="1" height="3" fill="#10c010"/><rect x="387" y="251" width="1" height="3" fill="#10c010"/><rect x="388" y="251" width="1" height="3" fill="#10c010"/><rect x="390" y="247" width="1" height="7" fill="#10c010"/><rect x="392" y="250" width="1" height="4" fill="#10c010"/><rect x="395" y="244" width="1" height="10" fill="#10c010"/><rect x="397" y="251" width="1" height="3" fill="#10c010"/><rect x="398" y="251" width="1" height="3" fill="#10c010"/><rect x="399" y="251" width="1" height="3" fill="#10c010"/><rect x="401" y="251" width="1" height="3" fill="#10c010"/><rect x="402" y="251" width="1" height="3" fill="#10c010"/><rect x="403" y="251" width="1" height="3" fill="#10c010"/><rect x="404" y="251" width="1" height="3" fill="#10c010"/><rect x="410" y="251" width="1" height="3" fill="#10c010"/><rect x="421" y="238" width="1" height="16" fill="#10c010"/><rect x="422" y="240" width="1" height="14" fill="#10c010"/><rect x="425" y="243" width="1" height="11" fill="#10c010"/><rect x="427" y="235" width="1" height="19" fill="#10c010"/><rect x="428" y="235" width="1" height="19" fill="#10c010"/><rect x="429" y="235" width="1" height="19" fill="#10c010"/><rect x="433" y="248" width="1" height="6" fill="#10c010"/><rect x="434" y="244" width="1" height="10" fill="#10c010"/><rect x="442" y="249" width="1" height="5" fill="#10c010"/><rect x="443" y="249" width="1" height="5" fill="#10c010"/><rect x="444" y="249" width="1" height="5" fill="#10c010"/><rect x="445" y="248" width="1" height="6" fill="#10c010"/><rect x="449" y="248" width="1" height="6" fill="#10c010"/><rect x="450" y="250" width="1" height="4" fill="#10c010"/><rect x="454" y="250" width="1" height="4" fill="#10c010"/><rect x="456" y="249" width="1" height="5" fill="#10c010"/><rect x="457" y="249" width="1" height="5" fill="#10c010"/><rect x="458" y="249" width="1" height="5" fill="#10c010"/><rect x="459" y="200" width="1" height="54" fill="#10c010"/><rect x="460" y="249" width="1" height="5" fill="#10c010"/><rect x="462" y="250" width="1" height="4" fill="#10c010"/><rect x="464" y="195" width="1" height="59" fill="#10c010"/><rect x="466" y="251" width="1" height="3" fill="#10c010"/><rect x="467" y="244" width="1" height="10" fill="#10c010"/><rect x="468" y="241" width="1" height="13" fill="#10c010"/><rect x="470" y="240" width="1" height="14" fill="#10c010"/><rect x="472" y="237" width="1" height="17" fill="#10c010"/><rect x="474" y="250" width="1" height="4" fill="#10c010"/><rect x="475" y="242" width="1" height="12" fill="#10c010"/><rect x="476" y="241" width="1" height="13" fill="#10c010"/><rect x="477" y="251" width="1" height="3" fill="#10c010"/><rect x="481" y="250" width="1" height="4" fill="#10c010"/><rect x="482" y="241" width="1" height="13" fill="#10c010"/><rect x="485" y="248" width="1" height="6" fill="#10c010"/><rect x="486" y="250" width="1" height="4" fill="#10c010"/><rect x="489" y="246" width="1" height="8" fill="#10c010"/><rect x="490" y="220" width="1" height="34" fill="#10c010"/><rect x="495" y="158" width="1" height="96" fill="#10c010"/><rect x="497" y="239" width="1" height="15" fill="#10c010"/><rect x="499" y="251" width="1" height="3" fill="#10c010"/><rect x="500" y="251" width="1" height="3" fill="#10c010"/><rect x="501" y="251" width="1" height="3" fill="#10c010"/><rect x="502" y="251" width="1" height="3" fill="#10c010"/><rect x="504" y="250" width="1" height="4" fill="#10c010"/><rect x="506" y="251" width="1" height="3" fill="#10c010"/><rect x="509" y="250" width="1" height="4" fill="#10c010"/><rect x="512" y="249" width="1" height="5" fill="#10c010"/><rect x="513" y="250" width="1" height="4" fill="#10c010"/><rect x="514" y="250" width="1" height="4" fill="#10c010"/><rect x="515" y="250" width="1" height="4" fill="#10c010"/><rect x="520" y="200" width="1" height="54" fill="#10c010"/><rect x="523" y="175" width="1" height="79" fill="#10c010"/><rect x="525" y="236" width="1" height="18" fill="#10c010"/><rect x="526" y="240" width="1" height="14" fill="#10c010"/><rect x="528" y="240" width="1" height="14" fill="#10c010"/><rect x="530" y="251" width="1" height="3" fill="#10c010"/><rect x="534" y="251" width="1" height="3" fill="#10c010"/><rect x="535" y="247" width="1" height="7" fill="#10c010"/><rect x="538" y="250" width="1" height="4" fill="#10c010"/><rect x="539" y="250" width="1" height="4" fill="#10c010"/><rect x="540" y="250" width="1" height="4" fill="#10c010"/><rect x="542" y="244" width="1" height="10" fill="#10c010"/><rect x="543" y="244" width="1" height="10" fill="#10c010"/><rect x="547" y="239" width="1" height="15" fill="#10c010"/><rect x="551" y="246" width="1" height="8" fill="#10c010"/><rect x="552" y="245" width="1" height="9" fill="#10c010"/><rect x="553" y="245" width="1" height="9" fill="#10c010"/><rect x="558" y="250" width="1" height="4" fill="#10c010"/><rect x="567" y="236" width="1" height="18" fill="#10c010"/><rect x="568" y="251" width="1" height="3" fill="#10c010"/><rect x="571" y="175" width="1" height="79" fill="#10c010"/><rect x="574" y="241" width="1" height="13" fill="#10c010"/><rect x="576" y="249" width="1" height="5" fill="#10c010"/><rect x="577" y="241" width="1" height="13" fill="#10c010"/><rect x="580" y="249" width="1" height="5" fill="#10c010"/><rect x="582" y="250" width="1" height="4" fill="#10c010"/><rect x="584" y="249" width="1" height="5" fill="#10c010"/><rect x="586" y="251" width="1" height="3" fill="#10c010"/><rect x="591" y="195" width="1" height="59" fill="#10c010"/><rect x="592" y="246" width="1" height="8" fill="#10c010"/><rect x="191" y="252" width="402" height="2" fill="#10c010"/><rect x="189" y="127" width="435" height="2" fill="#000"/><rect x="189" y="127" width="2" height="126" fill="#000"/><rect x="622" y="127" width="2" height="126" fill="#000"/><rect x="186" y="128" width="3" height="1" fill="#000"/><rect x="186" y="153" width="3" height="1" fill="#000"/><rect x="186" y="178" width="3" height="1" fill="#000"/><rect x="186" y="203" width="3" height="1" fill="#000"/><rect x="186" y="228" width="3" height="1" fill="#000"/><rect x="624" y="128" width="3" height="1" fill="#000"/><rect x="624" y="135" width="3" height="1" fill="#000"/><rect x="624" y="142" width="3" height="1" fill="#000"/><rect x="624" y="149" width="3" height="1" fill="#000"/><rect x="624" y="156" width="3" height="1" fill="#000"/><rect x="624" y="163" width="3" height="1" fill="#000"/><rect x="624" y="170" width="3" height="1" fill="#000"/><rect x="624" y="177" width="3" height="1" fill="#000"/><rect x="624" y="184" width="3" height="1" fill="#000"/><rect x="624" y="191" width="3" height="1" fill="#000"/><rect x="624" y="198" width="3" height="1" fill="#000"/><rect x="624" y="205" width="3" height="1" fill="#000"/><rect x="624" y="212" width="3" height="1" fill="#000"/><rect x="624" y="219" width="3" height="1" fill="#000"/><rect x="624" y="226" width="3" height="1" fill="#000"/><rect x="624" y="233" width="3" height="1" fill="#000"/><rect x="624" y="240" width="3" height="1" fill="#000"/><rect x="624" y="247" width="3" height="1" fill="#000"/></svg>
<svg style="position:absolute;left:0;top:0" width="661" height="524" shape-rendering="crispEdges"><defs><linearGradient id="pgl" x1="0" y1="0" x2="0" y2="1"><stop offset="0" stop-color="#4d5b7b"/><stop offset="1" stop-color="#7a89a8"/></linearGradient></defs><rect x="190" y="284" width="433" height="125" fill="url(#pgl)"/><rect x="198" y="284" width="1" height="125" fill="#555555"/><rect x="207" y="284" width="1" height="125" fill="#555555"/><rect x="215" y="284" width="1" height="125" fill="#555555"/><rect x="224" y="284" width="1" height="125" fill="#555555"/><rect x="233" y="284" width="1" height="125" fill="#141414"/><rect x="241" y="284" width="1" height="125" fill="#555555"/><rect x="250" y="284" width="1" height="125" fill="#555555"/><rect x="258" y="284" width="1" height="125" fill="#555555"/><rect x="267" y="284" width="1" height="125" fill="#555555"/><rect x="276" y="284" width="1" height="125" fill="#141414"/><rect x="284" y="284" width="1" height="125" fill="#555555"/><rect x="293" y="284" width="1" height="125" fill="#555555"/><rect x="302" y="284" width="1" height="125" fill="#555555"/><rect x="310" y="284" width="1" height="125" fill="#555555"/><rect x="319" y="284" width="1" height="125" fill="#141414"/><rect x="328" y="284" width="1" height="125" fill="#555555"/><rect x="336" y="284" width="1" height="125" fill="#555555"/><rect x="345" y="284" width="1" height="125" fill="#555555"/><rect x="354" y="284" width="1" height="125" fill="#555555"/><rect x="362" y="284" width="1" height="125" fill="#141414"/><rect x="371" y="284" width="1" height="125" fill="#555555"/><rect x="380" y="284" width="1" height="125" fill="#555555"/><rect x="388" y="284" width="1" height="125" fill="#555555"/><rect x="397" y="284" width="1" height="125" fill="#555555"/><rect x="406" y="284" width="1" height="125" fill="#141414"/><rect x="414" y="284" width="1" height="125" fill="#555555"/><rect x="423" y="284" width="1" height="125" fill="#555555"/><rect x="431" y="284" width="1" height="125" fill="#555555"/><rect x="440" y="284" width="1" height="125" fill="#555555"/><rect x="449" y="284" width="1" height="125" fill="#141414"/><rect x="457" y="284" width="1" height="125" fill="#555555"/><rect x="466" y="284" width="1" height="125" fill="#555555"/><rect x="475" y="284" width="1" height="125" fill="#555555"/><rect x="483" y="284" width="1" height="125" fill="#555555"/><rect x="492" y="284" width="1" height="125" fill="#141414"/><rect x="501" y="284" width="1" height="125" fill="#555555"/><rect x="509" y="284" width="1" height="125" fill="#555555"/><rect x="518" y="284" width="1" height="125" fill="#555555"/><rect x="527" y="284" width="1" height="125" fill="#555555"/><rect x="535" y="284" width="1" height="125" fill="#141414"/><rect x="544" y="284" width="1" height="125" fill="#555555"/><rect x="553" y="284" width="1" height="125" fill="#555555"/><rect x="561" y="284" width="1" height="125" fill="#555555"/><rect x="570" y="284" width="1" height="125" fill="#555555"/><rect x="579" y="284" width="1" height="125" fill="#141414"/><rect x="587" y="284" width="1" height="125" fill="#555555"/><rect x="596" y="284" width="1" height="125" fill="#555555"/><rect x="604" y="284" width="1" height="125" fill="#555555"/><rect x="613" y="284" width="1" height="125" fill="#555555"/><rect x="190" y="297" width="433" height="1" fill="#1e1e1e"/><rect x="190" y="309" width="433" height="1" fill="#1e1e1e"/><rect x="190" y="322" width="433" height="1" fill="#1e1e1e"/><rect x="190" y="334" width="433" height="1" fill="#1e1e1e"/><rect x="190" y="347" width="433" height="1" fill="#1e1e1e"/><rect x="190" y="359" width="433" height="1" fill="#1e1e1e"/><rect x="190" y="372" width="433" height="1" fill="#1e1e1e"/><rect x="190" y="384" width="433" height="1" fill="#1e1e1e"/><rect x="190" y="397" width="433" height="1" fill="#1e1e1e"/><rect x="189" y="409" width="435" height="1" fill="#000"/><rect x="189" y="410" width="1" height="1" fill="#000"/><rect x="233" y="410" width="1" height="1" fill="#000"/><rect x="276" y="410" width="1" height="1" fill="#000"/><rect x="319" y="410" width="1" height="1" fill="#000"/><rect x="362" y="410" width="1" height="1" fill="#000"/><rect x="406" y="410" width="1" height="1" fill="#000"/><rect x="449" y="410" width="1" height="1" fill="#000"/><rect x="492" y="410" width="1" height="1" fill="#000"/><rect x="535" y="410" width="1" height="1" fill="#000"/><rect x="579" y="410" width="1" height="1" fill="#000"/><rect x="622" y="410" width="1" height="1" fill="#000"/><rect x="190" y="397" width="403" height="13" fill="#00c800"/><rect x="221" y="397" width="1" height="13" fill="#3a3a3a"/><rect x="296" y="397" width="1" height="13" fill="#3a3a3a"/><rect x="309" y="397" width="1" height="13" fill="#3a3a3a"/><rect x="370" y="397" width="1" height="13" fill="#3a3a3a"/><rect x="478" y="397" width="1" height="13" fill="#3a3a3a"/><rect x="195" y="359" width="1" height="51" fill="#64dc00"/><rect x="191" y="384" width="1" height="26" fill="#64dc00"/><rect x="234" y="384" width="1" height="26" fill="#64dc00"/><rect x="266" y="372" width="1" height="38" fill="#64dc00"/><rect x="276" y="384" width="1" height="26" fill="#64dc00"/><rect x="300" y="322" width="1" height="88" fill="#64dc00"/><rect x="299" y="384" width="1" height="26" fill="#64dc00"/><rect x="311" y="384" width="1" height="26" fill="#64dc00"/><rect x="369" y="347" width="1" height="63" fill="#64dc00"/><rect x="377" y="334" width="1" height="76" fill="#64dc00"/><rect x="379" y="359" width="1" height="51" fill="#64dc00"/><rect x="405" y="359" width="1" height="51" fill="#64dc00"/><rect x="421" y="384" width="1" height="26" fill="#64dc00"/><rect x="427" y="372" width="1" height="38" fill="#64dc00"/><rect x="428" y="372" width="1" height="38" fill="#64dc00"/><rect x="435" y="297" width="1" height="113" fill="#64dc00"/><rect x="436" y="309" width="1" height="101" fill="#64dc00"/><rect x="446" y="309" width="1" height="101" fill="#64dc00"/><rect x="445" y="322" width="1" height="88" fill="#64dc00"/><rect x="453" y="384" width="1" height="26" fill="#64dc00"/><rect x="457" y="347" width="1" height="63" fill="#64dc00"/><rect x="458" y="359" width="1" height="51" fill="#64dc00"/><rect x="463" y="347" width="1" height="63" fill="#64dc00"/><rect x="467" y="384" width="1" height="26" fill="#64dc00"/><rect x="471" y="334" width="1" height="76" fill="#64dc00"/><rect x="472" y="384" width="1" height="26" fill="#64dc00"/><rect x="475" y="384" width="1" height="26" fill="#64dc00"/><rect x="481" y="384" width="1" height="26" fill="#64dc00"/><rect x="485" y="384" width="1" height="26" fill="#64dc00"/><rect x="489" y="372" width="1" height="38" fill="#64dc00"/><rect x="494" y="322" width="1" height="88" fill="#64dc00"/><rect x="495" y="297" width="1" height="113" fill="#64dc00"/><rect x="496" y="322" width="1" height="88" fill="#64dc00"/><rect x="513" y="384" width="1" height="26" fill="#64dc00"/><rect x="518" y="334" width="1" height="76" fill="#64dc00"/><rect x="519" y="359" width="1" height="51" fill="#64dc00"/><rect x="523" y="347" width="1" height="63" fill="#64dc00"/><rect x="524" y="334" width="1" height="76" fill="#64dc00"/><rect x="528" y="384" width="1" height="26" fill="#64dc00"/><rect x="546" y="359" width="1" height="51" fill="#64dc00"/><rect x="553" y="384" width="1" height="26" fill="#64dc00"/><rect x="567" y="384" width="1" height="26" fill="#64dc00"/><rect x="571" y="322" width="1" height="88" fill="#64dc00"/><rect x="572" y="322" width="1" height="88" fill="#64dc00"/><rect x="574" y="384" width="1" height="26" fill="#64dc00"/><rect x="577" y="384" width="1" height="26" fill="#64dc00"/><rect x="590" y="347" width="1" height="63" fill="#64dc00"/><rect x="589" y="372" width="1" height="38" fill="#64dc00"/><rect x="592" y="284" width="1" height="113" fill="#40c8f0"/><rect x="189" y="283" width="435" height="2" fill="#000"/><rect x="189" y="283" width="2" height="126" fill="#000"/><rect x="622" y="283" width="2" height="126" fill="#000"/><rect x="186" y="284" width="3" height="1" fill="#000"/><rect x="186" y="297" width="3" height="1" fill="#000"/><rect x="186" y="309" width="3" height="1" fill="#000"/><rect x="186" y="322" width="3" height="1" fill="#000"/><rect x="186" y="334" width="3" height="1" fill="#000"/><rect x="186" y="347" width="3" height="1" fill="#000"/><rect x="186" y="359" width="3" height="1" fill="#000"/><rect x="186" y="372" width="3" height="1" fill="#000"/><rect x="186" y="384" width="3" height="1" fill="#000"/><rect x="186" y="397" width="3" height="1" fill="#000"/></svg>
<div style="position:absolute;left:191px;top:117px;width:6px;height:8px;background:#007800"></div>
<div style="position:absolute;left:200.20px;top:116.11px;font-size:10.5px;line-height:10.5px;color:#000;font-weight:normal;white-space:pre;transform:scaleX(0.9286);transform-origin:0 0;-webkit-text-stroke:0.2px currentColor;">LDC</div>
<div style="position:absolute;left:223px;top:117px;width:6px;height:8px;background:#88ccf8"></div>
<div style="position:absolute;left:232.40px;top:116.11px;font-size:10.5px;line-height:10.5px;color:#000;font-weight:normal;white-space:pre;transform:scaleX(1.0079);transform-origin:0 0;-webkit-text-stroke:0.2px currentColor;">Read speed</div>
<div style="position:absolute;left:293px;top:117px;width:6px;height:8px;background:#f888f0"></div>
<div style="position:absolute;left:302.20px;top:116.11px;font-size:10.5px;line-height:10.5px;color:#000;font-weight:normal;white-space:pre;transform:scaleX(1.0242);transform-origin:0 0;-webkit-text-stroke:0.2px currentColor;">Write speed</div>
<div style="position:absolute;left:191px;top:273px;width:6px;height:8px;background:#007800"></div>
<div style="position:absolute;left:200.50px;top:272.11px;font-size:10.5px;line-height:10.5px;color:#000;font-weight:normal;white-space:pre;transform:scaleX(0.8580);transform-origin:0 0;-webkit-text-stroke:0.2px currentColor;">BIS</div>
<div style="position:absolute;left:219px;top:273px;width:6px;height:8px;background:#d0a0d0"></div>
<div style="position:absolute;left:227.80px;top:272.11px;font-size:10.5px;line-height:10.5px;color:#000;font-weight:normal;white-space:pre;transform:scaleX(0.9846);transform-origin:0 0;-webkit-text-stroke:0.2px currentColor;">Jitter</div>
<div style="position:absolute;left:254px;top:270px;width:6px;height:2px;background:#000"></div>
<div style="position:absolute;right:475.5px;top:123.11px;font-size:10.5px;line-height:10.5px;color:#000;font-weight:normal;white-space:pre;-webkit-text-stroke:0.2px currentColor;">500</div>
<div style="position:absolute;right:475.5px;top:148.11px;font-size:10.5px;line-height:10.5px;color:#000;font-weight:normal;white-space:pre;-webkit-text-stroke:0.2px currentColor;">400</div>
<div style="position:absolute;right:475.5px;top:173.11px;font-size:10.5px;line-height:10.5px;color:#000;font-weight:normal;white-space:pre;-webkit-text-stroke:0.2px currentColor;">300</div>
<div style="position:absolute;right:475.5px;top:198.11px;font-size:10.5px;line-height:10.5px;color:#000;font-weight:normal;white-space:pre;-webkit-text-stroke:0.2px currentColor;">200</div>
<div style="position:absolute;right:475.5px;top:223.11px;font-size:10.5px;line-height:10.5px;color:#000;font-weight:normal;white-space:pre;-webkit-text-stroke:0.2px currentColor;">100</div>
<div style="position:absolute;left:627px;top:123.11px;font-size:10.5px;line-height:10.5px;color:#000;font-weight:normal;white-space:pre;-webkit-text-stroke:0.2px currentColor;">18 X</div>
<div style="position:absolute;left:627px;top:137.01px;font-size:10.5px;line-height:10.5px;color:#000;font-weight:normal;white-space:pre;-webkit-text-stroke:0.2px currentColor;">16 X</div>
<div style="position:absolute;left:627px;top:150.91px;font-size:10.5px;line-height:10.5px;color:#000;font-weight:normal;white-space:pre;-webkit-text-stroke:0.2px currentColor;">14 X</div>
<div style="position:absolute;left:627px;top:164.81px;font-size:10.5px;line-height:10.5px;color:#000;font-weight:normal;white-space:pre;-webkit-text-stroke:0.2px currentColor;">12 X</div>
<div style="position:absolute;left:627px;top:178.71px;font-size:10.5px;line-height:10.5px;color:#000;font-weight:normal;white-space:pre;-webkit-text-stroke:0.2px currentColor;">10 X</div>
<div style="position:absolute;left:627px;top:192.61px;font-size:10.5px;line-height:10.5px;color:#000;font-weight:normal;white-space:pre;-webkit-text-stroke:0.2px currentColor;">8 X</div>
<div style="position:absolute;left:627px;top:206.51px;font-size:10.5px;line-height:10.5px;color:#000;font-weight:normal;white-space:pre;-webkit-text-stroke:0.2px currentColor;">6 X</div>
<div style="position:absolute;left:627px;top:220.41px;font-size:10.5px;line-height:10.5px;color:#000;font-weight:normal;white-space:pre;-webkit-text-stroke:0.2px currentColor;">4 X</div>
<div style="position:absolute;left:627px;top:234.31px;font-size:10.5px;line-height:10.5px;color:#000;font-weight:normal;white-space:pre;-webkit-text-stroke:0.2px currentColor;">2 X</div>
<div style="position:absolute;left:183.00px;top:255.11px;font-size:10.5px;line-height:10.5px;color:#000;font-weight:normal;white-space:pre;transform:scaleX(0.8904);transform-origin:0 0;-webkit-text-stroke:0.2px currentColor;">0.0</div>
<div style="position:absolute;left:183.00px;top:411.11px;font-size:10.5px;line-height:10.5px;color:#000;font-weight:normal;white-space:pre;transform:scaleX(0.8904);transform-origin:0 0;-webkit-text-stroke:0.2px currentColor;">0.0</div>
<div style="position:absolute;left:225.00px;top:255.11px;font-size:10.5px;line-height:10.5px;color:#000;font-weight:normal;white-space:pre;transform:scaleX(1.0274);transform-origin:0 0;-webkit-text-stroke:0.2px currentColor;">2.5</div>
<div style="position:absolute;left:225.00px;top:411.11px;font-size:10.5px;line-height:10.5px;color:#000;font-weight:normal;white-space:pre;transform:scaleX(1.0274);transform-origin:0 0;-webkit-text-stroke:0.2px currentColor;">2.5</div>
<div style="position:absolute;left:268.00px;top:255.11px;font-size:10.5px;line-height:10.5px;color:#000;font-weight:normal;white-space:pre;transform:scaleX(0.9863);transform-origin:0 0;-webkit-text-stroke:0.2px currentColor;">5.0</div>
<div style="position:absolute;left:268.00px;top:411.11px;font-size:10.5px;line-height:10.5px;color:#000;font-weight:normal;white-space:pre;transform:scaleX(0.9863);transform-origin:0 0;-webkit-text-stroke:0.2px currentColor;">5.0</div>
<div style="position:absolute;left:311.60px;top:255.11px;font-size:10.5px;line-height:10.5px;color:#000;font-weight:normal;white-space:pre;transform:scaleX(0.9863);transform-origin:0 0;-webkit-text-stroke:0.2px currentColor;">7.5</div>
<div style="position:absolute;left:311.60px;top:411.11px;font-size:10.5px;line-height:10.5px;color:#000;font-weight:normal;white-space:pre;transform:scaleX(0.9863);transform-origin:0 0;-webkit-text-stroke:0.2px currentColor;">7.5</div>
<div style="position:absolute;left:352.00px;top:255.11px;font-size:10.5px;line-height:10.5px;color:#000;font-weight:normal;white-space:pre;transform:scaleX(0.9780);transform-origin:0 0;-webkit-text-stroke:0.2px currentColor;">10.0</div>
<div style="position:absolute;left:352.00px;top:411.11px;font-size:10.5px;line-height:10.5px;color:#000;font-weight:normal;white-space:pre;transform:scaleX(0.9780);transform-origin:0 0;-webkit-text-stroke:0.2px currentColor;">10.0</div>
<div style="position:absolute;left:395.60px;top:255.11px;font-size:10.5px;line-height:10.5px;color:#000;font-weight:normal;white-space:pre;transform:scaleX(0.9976);transform-origin:0 0;-webkit-text-stroke:0.2px currentColor;">12.5</div>
<div style="position:absolute;left:395.60px;top:411.11px;font-size:10.5px;line-height:10.5px;color:#000;font-weight:normal;white-space:pre;transform:scaleX(0.9976);transform-origin:0 0;-webkit-text-stroke:0.2px currentColor;">12.5</div>
<div style="position:absolute;left:439.00px;top:255.11px;font-size:10.5px;line-height:10.5px;color:#000;font-weight:normal;white-space:pre;transform:scaleX(0.9487);transform-origin:0 0;-webkit-text-stroke:0.2px currentColor;">15.0</div>
<div style="position:absolute;left:439.00px;top:411.11px;font-size:10.5px;line-height:10.5px;color:#000;font-weight:normal;white-space:pre;transform:scaleX(0.9487);transform-origin:0 0;-webkit-text-stroke:0.2px currentColor;">15.0</div>
<div style="position:absolute;left:481.60px;top:255.11px;font-size:10.5px;line-height:10.5px;color:#000;font-weight:normal;white-space:pre;transform:scaleX(0.9976);transform-origin:0 0;-webkit-text-stroke:0.2px currentColor;">17.5</div>
<div style="position:absolute;left:481.60px;top:411.11px;font-size:10.5px;line-height:10.5px;color:#000;font-weight:normal;white-space:pre;transform:scaleX(0.9976);transform-origin:0 0;-webkit-text-stroke:0.2px currentColor;">17.5</div>
<div style="position:absolute;left:524.40px;top:255.11px;font-size:10.5px;line-height:10.5px;color:#000;font-weight:normal;white-space:pre;transform:scaleX(0.9780);transform-origin:0 0;-webkit-text-stroke:0.2px currentColor;">20.0</div>
<div style="position:absolute;left:524.40px;top:411.11px;font-size:10.5px;line-height:10.5px;color:#000;font-weight:normal;white-space:pre;transform:scaleX(0.9780);transform-origin:0 0;-webkit-text-stroke:0.2px currentColor;">20.0</div>
<div style="position:absolute;left:567.00px;top:255.11px;font-size:10.5px;line-height:10.5px;color:#000;font-weight:normal;white-space:pre;transform:scaleX(1.0269);transform-origin:0 0;-webkit-text-stroke:0.2px currentColor;">22.5</div>
<div style="position:absolute;left:567.00px;top:411.11px;font-size:10.5px;line-height:10.5px;color:#000;font-weight:normal;white-space:pre;transform:scaleX(1.0269);transform-origin:0 0;-webkit-text-stroke:0.2px currentColor;">22.5</div>
<div style="position:absolute;left:602.40px;top:255.11px;font-size:10.5px;line-height:10.5px;color:#000;font-weight:normal;white-space:pre;transform:scaleX(1.0026);transform-origin:0 0;-webkit-text-stroke:0.2px currentColor;">25.0 GB</div>
<div style="position:absolute;left:602.40px;top:411.11px;font-size:10.5px;line-height:10.5px;color:#000;font-weight:normal;white-space:pre;transform:scaleX(1.0026);transform-origin:0 0;-webkit-text-stroke:0.2px currentColor;">25.0 GB</div>
<div style="position:absolute;right:475.5px;top:279.61px;font-size:10.5px;line-height:10.5px;color:#000;font-weight:normal;white-space:pre;-webkit-text-stroke:0.2px currentColor;">10</div>
<div style="position:absolute;right:475.5px;top:292.61px;font-size:10.5px;line-height:10.5px;color:#000;font-weight:normal;white-space:pre;-webkit-text-stroke:0.2px currentColor;">9</div>
<div style="position:absolute;right:475.5px;top:304.61px;font-size:10.5px;line-height:10.5px;color:#000;font-weight:normal;white-space:pre;-webkit-text-stroke:0.2px currentColor;">8</div>
<div style="position:absolute;right:475.5px;top:317.61px;font-size:10.5px;line-height:10.5px;color:#000;font-weight:normal;white-space:pre;-webkit-text-stroke:0.2px currentColor;">7</div>
<div style="position:absolute;right:475.5px;top:329.61px;font-size:10.5px;line-height:10.5px;color:#000;font-weight:normal;white-space:pre;-webkit-text-stroke:0.2px currentColor;">6</div>
<div style="position:absolute;right:475.5px;top:342.61px;font-size:10.5px;line-height:10.5px;color:#000;font-weight:normal;white-space:pre;-webkit-text-stroke:0.2px currentColor;">5</div>
<div style="position:absolute;right:475.5px;top:354.61px;font-size:10.5px;line-height:10.5px;color:#000;font-weight:normal;white-space:pre;-webkit-text-stroke:0.2px currentColor;">4</div>
<div style="position:absolute;right:475.5px;top:367.61px;font-size:10.5px;line-height:10.5px;color:#000;font-weight:normal;white-space:pre;-webkit-text-stroke:0.2px currentColor;">3</div>
<div style="position:absolute;right:475.5px;top:379.61px;font-size:10.5px;line-height:10.5px;color:#000;font-weight:normal;white-space:pre;-webkit-text-stroke:0.2px currentColor;">2</div>
<div style="position:absolute;right:475.5px;top:392.61px;font-size:10.5px;line-height:10.5px;color:#000;font-weight:normal;white-space:pre;-webkit-text-stroke:0.2px currentColor;">1</div>
<div style="position:absolute;left:627px;top:279.61px;font-size:10.5px;line-height:10.5px;color:#000;font-weight:normal;white-space:pre;-webkit-text-stroke:0.2px currentColor;">10%</div>
<div style="position:absolute;left:627px;top:304.71px;font-size:10.5px;line-height:10.5px;color:#000;font-weight:normal;white-space:pre;-webkit-text-stroke:0.2px currentColor;">8%</div>
<div style="position:absolute;left:627px;top:329.81px;font-size:10.5px;line-height:10.5px;color:#000;font-weight:normal;white-space:pre;-webkit-text-stroke:0.2px currentColor;">6%</div>
<div style="position:absolute;left:627px;top:354.91px;font-size:10.5px;line-height:10.5px;color:#000;font-weight:normal;white-space:pre;-webkit-text-stroke:0.2px currentColor;">4%</div>
<div style="position:absolute;left:627px;top:380.01px;font-size:10.5px;line-height:10.5px;color:#000;font-weight:normal;white-space:pre;-webkit-text-stroke:0.2px currentColor;">2%</div>
<div style="position:absolute;left:252.70px;top:430.69px;font-size:11px;line-height:11px;color:#000;font-weight:normal;white-space:pre;transform:scaleX(0.8591);transform-origin:0 0;-webkit-text-stroke:0.2px currentColor;">LDC</div>
<div style="position:absolute;left:310.50px;top:430.69px;font-size:11px;line-height:11px;color:#000;font-weight:normal;white-space:pre;transform:scaleX(0.8789);transform-origin:0 0;-webkit-text-stroke:0.2px currentColor;">BIS</div>
<div style="position:absolute;left:163.00px;top:447.69px;font-size:11px;line-height:11px;color:#000;font-weight:normal;white-space:pre;transform:scaleX(0.9920);transform-origin:0 0;-webkit-text-stroke:0.2px currentColor;">Avg</div>
<div style="position:absolute;left:163.60px;top:463.69px;font-size:11px;line-height:11px;color:#000;font-weight:normal;white-space:pre;transform:scaleX(0.9808);transform-origin:0 0;-webkit-text-stroke:0.2px currentColor;">Max</div>
<div style="position:absolute;left:161.00px;top:479.69px;font-size:11px;line-height:11px;color:#000;font-weight:normal;white-space:pre;transform:scaleX(1.0323);transform-origin:0 0;-webkit-text-stroke:0.2px currentColor;">Total</div>
<div style="position:absolute;left:252.70px;top:447.69px;font-size:11px;line-height:11px;color:#2222ff;font-weight:normal;white-space:pre;transform:scaleX(0.9533);transform-origin:0 0;-webkit-text-stroke:0.2px currentColor;">1.54</div>
<div style="position:absolute;left:255.00px;top:463.69px;font-size:11px;line-height:11px;color:#2222ff;font-weight:normal;white-space:pre;transform:scaleX(0.9864);transform-origin:0 0;-webkit-text-stroke:0.2px currentColor;">407</div>
<div style="position:absolute;left:236.80px;top:479.69px;font-size:11px;line-height:11px;color:#2222ff;font-weight:normal;white-space:pre;transform:scaleX(0.9346);transform-origin:0 0;-webkit-text-stroke:0.2px currentColor;">586787</div>
<div style="position:absolute;left:306.00px;top:447.69px;font-size:11px;line-height:11px;color:#2222ff;font-weight:normal;white-space:pre;transform:scaleX(0.9533);transform-origin:0 0;-webkit-text-stroke:0.2px currentColor;">0.03</div>
<div style="position:absolute;left:320.80px;top:463.69px;font-size:11px;line-height:11px;color:#2222ff;font-weight:normal;white-space:pre;transform:scaleX(0.9180);transform-origin:0 0;-webkit-text-stroke:0.2px currentColor;">9</div>
<div style="position:absolute;left:303.40px;top:479.69px;font-size:11px;line-height:11px;color:#2222ff;font-weight:normal;white-space:pre;transform:scaleX(0.9407);transform-origin:0 0;-webkit-text-stroke:0.2px currentColor;">9862</div>
<div style="position:absolute;left:395px;top:430px;width:13px;height:13px;background:#fff;border:1px solid #333;box-sizing:border-box"></div>
<svg style="position:absolute;left:395px;top:430px" width="13" height="13" viewBox="0 0 13 13"><path d="M2.5 6.5L5 9L10.5 3.5" fill="none" stroke="#333" stroke-width="1.2"/></svg>
<div style="position:absolute;left:417.00px;top:431.69px;font-size:11px;line-height:11px;color:#000;font-weight:normal;white-space:pre;transform:scaleX(1.0063);transform-origin:0 0;-webkit-text-stroke:0.2px currentColor;">Jitter</div>
<div style="position:absolute;left:415.00px;top:447.69px;font-size:11px;line-height:11px;color:#2222ff;font-weight:normal;white-space:pre;transform:scaleX(0.9391);transform-origin:0 0;-webkit-text-stroke:0.2px currentColor;">-0.1%</div>
<div style="position:absolute;left:419.00px;top:463.69px;font-size:11px;line-height:11px;color:#2222ff;font-weight:normal;white-space:pre;transform:scaleX(0.9182);transform-origin:0 0;-webkit-text-stroke:0.2px currentColor;">0.0%</div>
<div style="position:absolute;left:461.60px;top:435.69px;font-size:11px;line-height:11px;color:#000;font-weight:normal;white-space:pre;transform:scaleX(0.9748);transform-origin:0 0;-webkit-text-stroke:0.2px currentColor;">Speed</div>
<div style="position:absolute;left:520.40px;top:435.69px;font-size:11px;line-height:11px;color:#2222ff;font-weight:normal;white-space:pre;transform:scaleX(0.9308);transform-origin:0 0;-webkit-text-stroke:0.2px currentColor;">4.23 X</div>
<div style="position:absolute;left:461.60px;top:463.69px;font-size:11px;line-height:11px;color:#000;font-weight:normal;white-space:pre;transform:scaleX(1.0421);transform-origin:0 0;-webkit-text-stroke:0.2px currentColor;">Position</div>
<div style="position:absolute;left:520.40px;top:463.69px;font-size:11px;line-height:11px;color:#2222ff;font-weight:normal;white-space:pre;transform:scaleX(0.9811);transform-origin:0 0;-webkit-text-stroke:0.2px currentColor;">23862 MB</div>
<div style="position:absolute;left:461.60px;top:479.69px;font-size:11px;line-height:11px;color:#000;font-weight:normal;white-space:pre;transform:scaleX(0.9533);transform-origin:0 0;-webkit-text-stroke:0.2px currentColor;">Samples</div>
<div style="position:absolute;left:520.40px;top:479.69px;font-size:11px;line-height:11px;color:#2222ff;font-weight:normal;white-space:pre;transform:scaleX(0.9700);transform-origin:0 0;-webkit-text-stroke:0.2px currentColor;">380670</div>
<div style="position:absolute;left:575px;top:428px;width:75px;height:21px;background:#e5e5e5;border:1px solid #adadad;box-sizing:border-box"></div>
<div style="position:absolute;left:578.90px;top:434.19px;font-size:11px;line-height:11px;color:#000;font-weight:normal;white-space:pre;transform:scaleX(0.9300);transform-origin:0 0;-webkit-text-stroke:0.2px currentColor;">4.2 X</div>
<svg style="position:absolute;left:636px;top:436px" width="10" height="6" viewBox="0 0 10 6"><path d="M0.5 0.5L5 5L9.5 0.5" fill="none" stroke="#333" stroke-width="1.1"/></svg>
<div style="position:absolute;left:576px;top:452px;width:73px;height:21px;background:#e1e1e1;border:1px solid #adadad;box-sizing:border-box"></div>
<div style="position:absolute;left:590.60px;top:457.69px;font-size:11px;line-height:11px;color:#000;font-weight:normal;white-space:pre;transform:scaleX(1.0607);transform-origin:0 0;-webkit-text-stroke:0.2px currentColor;">Start full</div>
<div style="position:absolute;left:575px;top:479px;width:73px;height:21px;background:#e1e1e1;border:1px solid #adadad;box-sizing:border-box"></div>
<div style="position:absolute;left:587.60px;top:484.39px;font-size:11px;line-height:11px;color:#000;font-weight:normal;white-space:pre;transform:scaleX(1.0453);transform-origin:0 0;-webkit-text-stroke:0.2px currentColor;">Start part</div>
<div style="position:absolute;left:1px;top:503px;width:155px;height:2px;background:#eeeefc"></div>
<div style="position:absolute;left:1px;top:505px;width:659px;height:18px;background:#f0f0f0"></div>
<div style="position:absolute;left:4.00px;top:508.84px;font-size:12px;line-height:12px;color:#000;font-weight:normal;white-space:pre;transform:scaleX(0.8798);transform-origin:0 0;-webkit-text-stroke:0.2px currentColor;">Test completed</div>
<div style="position:absolute;left:141px;top:506px;width:1px;height:16px;background:#d4d4d4"></div>
<div style="position:absolute;left:146px;top:508px;width:303px;height:13px;background:#e6e6e6;border:1px solid #cfc8d0;box-sizing:border-box"></div>
<div style="position:absolute;left:147px;top:509px;width:301px;height:11px;background:#06b025"></div>
<div style="position:absolute;left:455.00px;top:508.84px;font-size:12px;line-height:12px;color:#000;font-weight:normal;white-space:pre;transform:scaleX(0.8206);transform-origin:0 0;-webkit-text-stroke:0.2px currentColor;">100.0%</div>
<div style="position:absolute;left:507px;top:506px;width:1px;height:16px;background:#d4d4d4"></div>
<div style="position:absolute;left:602.40px;top:508.84px;font-size:12px;line-height:12px;color:#000;font-weight:normal;white-space:pre;transform:scaleX(0.8319);transform-origin:0 0;-webkit-text-stroke:0.2px currentColor;">31:31</div>
<div style="position:absolute;left:630px;top:506px;width:1px;height:16px;background:#d4d4d4"></div>
<div style="position:absolute;left:656px;top:513px;width:2px;height:2px;background:#b8b8b8"></div>
<div style="position:absolute;left:653px;top:516px;width:2px;height:2px;background:#b8b8b8"></div>
<div style="position:absolute;left:656px;top:516px;width:2px;height:2px;background:#b8b8b8"></div>
<div style="position:absolute;left:650px;top:519px;width:2px;height:2px;background:#b8b8b8"></div>
<div style="position:absolute;left:653px;top:519px;width:2px;height:2px;background:#b8b8b8"></div>
<div style="position:absolute;left:656px;top:519px;width:2px;height:2px;background:#b8b8b8"></div></div></body></html>
